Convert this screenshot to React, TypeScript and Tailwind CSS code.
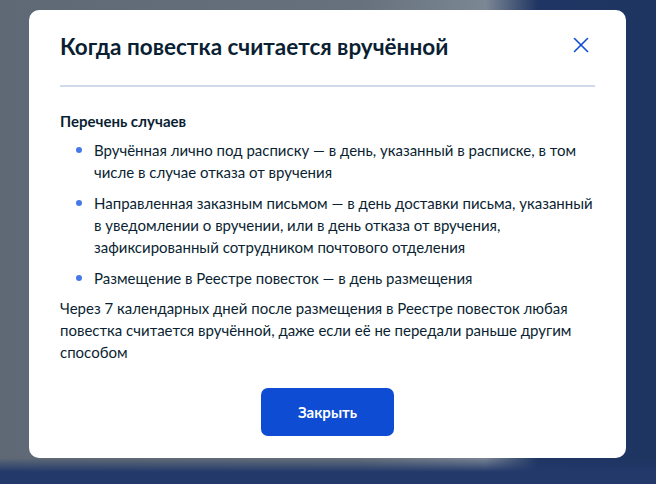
import { X } from 'lucide-react'

const cases = [
  'Вручённая лично под расписку — в день, указанный в расписке, в том числе в случае отказа от вручения',
  'Направленная заказным письмом — в день доставки письма, указанный в уведомлении о вручении, или в день отказа от вручения, зафиксированный сотрудником почтового отделения',
  'Размещение в Реестре повесток — в день размещения',
]

export default function App() {
  return (
    <div
      className="h-[484px] w-[656px] overflow-hidden bg-[linear-gradient(to_bottom,transparent_0px,transparent_458px,#22396a_472px),linear-gradient(to_right,#5e6975_0%,#66717d_55%,#7c8794_74%,#1f3563_82%,#1e3461_100%)] pt-[10px] pl-[29px]"
      style={{ fontFamily: 'Lato, "Noto Sans", sans-serif' }}
    >
      <div className="w-[597px] rounded-[10px] bg-white px-[31px] pt-[21px] pb-[22px] text-[#0b1f33]">
        <div className="flex items-start justify-between">
          <h2 className="text-[22.5px] leading-[32px] font-bold">Когда повестка считается вручённой</h2>
          <button className="mt-[1px] mr-[1px] text-[#0d4cd3]">
            <X size={26} strokeWidth={1.5} />
          </button>
        </div>
        <div className="mt-[22px] h-[2px] bg-[#cfdbe9]" />
        <div className="mt-[23px] text-[15px] leading-[22px] font-bold">Перечень случаев</div>
        <ul className="mt-[7px] flex flex-col gap-[9px]">
          {cases.map((text) => (
            <li key={text} className="flex text-[15px] leading-[22px]">
              <span className="mt-[8px] ml-[16px] mr-[12px] h-[6px] w-[6px] shrink-0 rounded-full bg-[#4679e8]" />
              <span>{text}</span>
            </li>
          ))}
        </ul>
        <p className="mt-[8px] text-[15px] leading-[22px]">
          Через 7 календарных дней после размещения в Реестре повесток любая повестка считается вручённой, даже если её не передали раньше другим способом
        </p>
        <div className="mt-[25px] flex justify-center">
          <button className="h-[48px] w-[133px] rounded-[7px] bg-[#0d4cd3] text-[15px] font-bold text-white">
            Закрыть
          </button>
        </div>
      </div>
    </div>
  )
}
